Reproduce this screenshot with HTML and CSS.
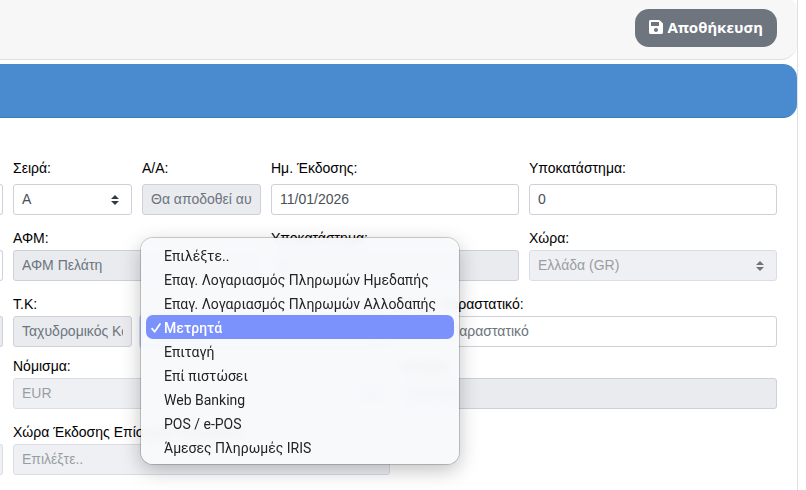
FILE: index.html
```html
<!DOCTYPE html>
<html lang="el">
<head>
    <meta charset="UTF-8">
    <meta name="viewport" content="width=device-width, initial-scale=1.0">
    <title>Έκδοση Παραστατικού</title>
    <link rel="stylesheet" href="styles.css">
</head>
<body>
    <div class="panel">
        <header class="toolbar">
            <button type="button" class="btn-save">
                <svg width="14" height="16" viewBox="0 0 448 512" fill="currentColor" aria-hidden="true"><path d="M433.941 129.941l-83.882-83.882A48 48 0 0 0 316.118 32H48C21.49 32 0 53.49 0 80v352c0 26.51 21.49 48 48 48h352c26.51 0 48-21.49 48-48V163.882a48 48 0 0 0-14.059-33.941zM224 416c-35.346 0-64-28.654-64-64 0-35.346 28.654-64 64-64s64 28.654 64 64c0 35.346-28.654 64-64 64zm96-304.52V212c0 6.627-5.373 12-12 12H76c-6.627 0-12-5.373-12-12V108c0-6.627 5.373-12 12-12h228.52c3.183 0 6.235 1.264 8.485 3.515l3.48 3.48A11.996 11.996 0 0 1 320 111.48z"/></svg>
                Αποθήκευση
            </button>
        </header>
        <div class="banner"></div>

        <form class="form">
            <div class="row first">
                <div class="edge"></div>
                <div class="field">
                    <label for="series">Σειρά:</label>
                    <select id="series"><option>Α</option></select>
                </div>
                <div class="field">
                    <label for="number">Α/Α:</label>
                    <input type="text" id="number" placeholder="Θα αποδοθεί αυτόματα" readonly>
                </div>
                <div class="field span2">
                    <label for="date">Ημ. Έκδοσης:</label>
                    <input type="text" id="date" value="11/01/2026">
                </div>
                <div class="field span2">
                    <label for="branch">Υποκατάστημα:</label>
                    <input type="text" id="branch" value="0">
                </div>
            </div>

            <div class="row">
                <div class="edge"></div>
                <div class="field span2">
                    <label for="vat">ΑΦΜ:</label>
                    <input type="text" id="vat" placeholder="ΑΦΜ Πελάτη" readonly>
                </div>
                <div class="field span2">
                    <label for="customerBranch">Υποκατάστημα:</label>
                    <input type="text" id="customerBranch" value="0" readonly>
                </div>
                <div class="field span2">
                    <label for="country">Χώρα:</label>
                    <select id="country" disabled><option>Ελλάδα (GR)</option></select>
                </div>
            </div>

            <div class="row">
                <div class="edge readonly"></div>
                <div class="field">
                    <label for="zip">Τ.Κ:</label>
                    <input type="text" id="zip" placeholder="Ταχυδρομικός Κώδικας" readonly>
                </div>
                <div class="field span2">
                    <select id="payment" class="open" aria-label="Τρόπος Πληρωμής"><option>Μετρητά</option></select>
                    <!-- open list of payment methods -->
                    <div class="menu" role="listbox" aria-label="Τρόπος Πληρωμής">
                        <button type="button" role="option">Επιλέξτε..</button>
                        <button type="button" role="option">Επαγ. Λογαριασμός Πληρωμών Ημεδαπής</button>
                        <button type="button" role="option">Επαγ. Λογαριασμός Πληρωμών Αλλοδαπής</button>
                        <button type="button" role="option" class="selected" aria-selected="true"><svg class="check" width="10" height="10" viewBox="0 0 10 10" fill="none" stroke="currentColor" stroke-width="1.7" stroke-linecap="round" stroke-linejoin="round" aria-hidden="true"><path d="M1 5.6L3.7 8.8L9 1"/></svg>Μετρητά</button>
                        <button type="button" role="option">Επιταγή</button>
                        <button type="button" role="option">Επί πιστώσει</button>
                        <button type="button" role="option">Web Banking</button>
                        <button type="button" role="option">POS / e-POS</button>
                        <button type="button" role="option">Άμεσες Πληρωμές IRIS</button>
                    </div>
                </div>
                <div class="field span3">
                    <label for="related">Συσχ. Παραστατικό:</label>
                    <input type="text" id="related" placeholder="Συσχ. Παραστατικό">
                </div>
            </div>

            <div class="row tight">
                <div></div>
                <div class="field span3">
                    <label for="currency">Νόμισμα:</label>
                    <select id="currency" disabled><option>EUR</option></select>
                </div>
                <div class="field span3">
                    <label for="rate">Ισοτιμία:</label>
                    <input type="text" id="rate" placeholder="Ισοτιμία" readonly>
                </div>
            </div>

            <div class="row">
                <div class="edge disabled"></div>
                <div class="field span3">
                    <label for="docCountry">Χώρα Έκδοσης Επίσημου Εγγράφου:</label>
                    <select id="docCountry" class="plain" disabled><option>Επιλέξτε..</option></select>
                </div>
            </div>
        </form>
    </div>
</body>
</html>
```
FILE: styles.css
```css
* {
    box-sizing: border-box;
}
body {
    margin: 0;
    background-color: #fff;
    font-family: "Liberation Sans", Arial, sans-serif;
    font-size: 14px;
    color: #000;
}
.panel {
    margin-right: 8px;
    min-height: 100vh;
    border-right: 1px solid #dee0e3;
}
.toolbar {
    display: flex;
    justify-content: flex-end;
    padding: 9px 20px 12px;
    background-color: #f7f7f7;
    border-bottom: 1px solid #dfdfdf;
    border-radius: 0 8px 16px 0;
}
.btn-save {
    display: flex;
    align-items: center;
    gap: 4px;
    height: 38px;
    padding: 0 14px 2px;
    border: none;
    border-radius: 14px;
    background-color: #6e757f;
    color: #fff;
    font-family: "Noto Sans", sans-serif;
    font-size: 15px;
    font-weight: 700;
    cursor: pointer;
}
.banner {
    height: 54px;
    margin-top: 4px;
    background-color: #4a8bcf;
    border-bottom: 1px solid #3b7bbe;
    border-radius: 0 14px 14px 0;
}
.form {
    padding: 40px 20px 15px 0;
}
/* narrow leading column, then six equal ones */
.row {
    display: grid;
    grid-template-columns: 3px repeat(6, minmax(0, 1fr));
    gap: 10px;
    margin-top: 13px;
}
.row.first {
    margin-top: 0;
}
.row.tight {
    margin-top: 9px;
}
.field {
    position: relative;
    display: flex;
    flex-direction: column;
    justify-content: flex-end;
    gap: 2px;
}
.first .field {
    gap: 6px;
}
.span2 {
    grid-column: span 2;
}
.span3 {
    grid-column: span 3;
}
.edge {
    align-self: end;
    height: 31px;
    border: 1px solid #ced0da;
    border-left: none;
    border-radius: 0 4px 4px 0;
}
label {
    line-height: 20px;
    white-space: nowrap;
}
input,
select {
    width: 100%;
    height: 31px;
    padding: 0 8px 2px;
    border: 1px solid #ced0da;
    border-radius: 3px;
    background-color: #fff;
    color: #495057;
    font: inherit;
}
select {
    appearance: none;
    background-image: url("data:image/svg+xml,%3csvg xmlns='http://www.w3.org/2000/svg' viewBox='0 0 4 5'%3e%3cpath fill='%23343a40' d='M2 0L0 2h4zm0 5L0 3h4z'/%3e%3c/svg%3e");
    background-repeat: no-repeat;
    background-position: right 12px center;
    background-size: 8px 10px;
}
select.plain {
    background-image: none;
}
input::placeholder {
    color: #6c757d;
    opacity: 1;
}
input:read-only,
.edge.readonly {
    background-color: #e9ebef;
}
select:disabled,
.edge.disabled {
    background-color: #e9ebef;
    color: #6c757d;
    opacity: 0.7;
}
.open {
    border-color: #8ea2fb;
    box-shadow: 0 0 0 3px #d0d8fd;
}
.menu {
    position: absolute;
    top: -56px;
    left: -1px;
    z-index: 10;
    display: flex;
    flex-direction: column;
    width: max-content;
    padding: 5px;
    border-radius: 12px;
    background-color: rgba(248, 249, 251, 0.94);
    backdrop-filter: blur(5px);
    box-shadow: 0 0 0 1px rgba(0, 0, 0, 0.18), 0 6px 20px rgba(0, 0, 0, 0.25);
}
.menu button {
    display: flex;
    align-items: center;
    height: 24px;
    padding: 2px 18px 0;
    border: none;
    border-radius: 7px;
    background: none;
    color: #242424;
    font-family: Roboto, sans-serif;
    font-size: 14px;
    text-align: left;
}
.menu .selected {
    gap: 3px;
    padding-left: 5px;
    background-color: #7b92fd;
    color: #fff;
    font-weight: 500;
}
```
